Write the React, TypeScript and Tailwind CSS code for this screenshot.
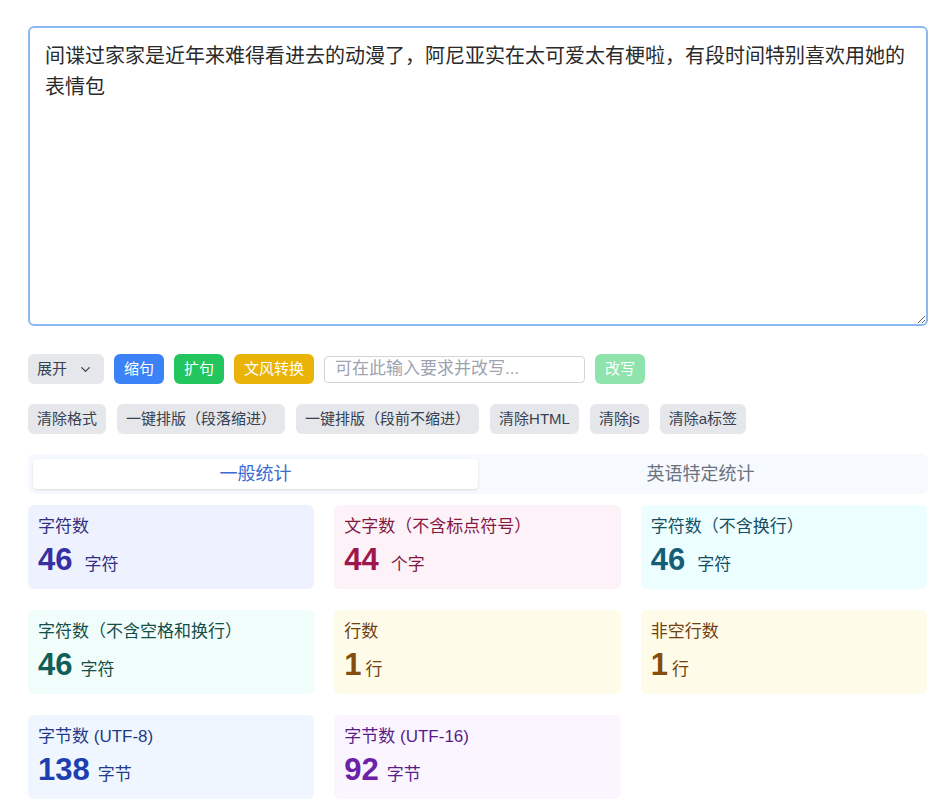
import { useState } from "react";

const FONT = { fontFamily: '"Liberation Sans", "Noto Sans CJK SC", sans-serif' };

const TEXT =
  "间谍过家家是近年来难得看进去的动漫了，阿尼亚实在太可爱太有梗啦，有段时间特别喜欢用她的表情包";

interface Stat {
  label: string;
  value: string;
  unit: string;
  box: string;
  labelColor: string;
  valueColor: string;
  gap: string;
}

const STATS: Stat[] = [
  { label: "字符数", value: "46", unit: "字符", box: "bg-[#eef2ff]", labelColor: "text-[#312e81]", valueColor: "text-[#3730a3]", gap: "gap-[12px]" },
  { label: "文字数（不含标点符号）", value: "44", unit: "个字", box: "bg-[#fdf2f8]", labelColor: "text-[#831843]", valueColor: "text-[#9d174d]", gap: "gap-[12px]" },
  { label: "字符数（不含换行）", value: "46", unit: "字符", box: "bg-[#ecfeff]", labelColor: "text-[#164e63]", valueColor: "text-[#155e75]", gap: "gap-[12px]" },
  { label: "字符数（不含空格和换行）", value: "46", unit: "字符", box: "bg-[#f0fdfa]", labelColor: "text-[#134e4a]", valueColor: "text-[#115e59]", gap: "gap-[8px]" },
  { label: "行数", value: "1", unit: "行", box: "bg-[#fefce8]", labelColor: "text-[#713f12]", valueColor: "text-[#854d0e]", gap: "gap-[4px]" },
  { label: "非空行数", value: "1", unit: "行", box: "bg-[#fefce8]", labelColor: "text-[#713f12]", valueColor: "text-[#854d0e]", gap: "gap-[4px]" },
  { label: "字节数 (UTF-8)", value: "138", unit: "字节", box: "bg-[#eff6ff]", labelColor: "text-[#1e3a8a]", valueColor: "text-[#1e40af]", gap: "gap-[8px]" },
  { label: "字节数 (UTF-16)", value: "92", unit: "字节", box: "bg-[#faf5ff]", labelColor: "text-[#581c87]", valueColor: "text-[#6b21a8]", gap: "gap-[8px]" },
];

const CLEAN = ["清除格式", "一键排版（段落缩进）", "一键排版（段前不缩进）", "清除HTML", "清除js", "清除a标签"];

export default function App() {
  const [text, setText] = useState(TEXT);
  const [tab, setTab] = useState(0);

  return (
    <div className="bg-white min-h-screen pt-[26px] pl-[28px]" style={FONT}>
      <div className="w-[900px]">
        <textarea
          value={text}
          onChange={(e) => setText(e.target.value)}
          className="block w-full h-[300px] rounded-md border-2 border-[#8cb8f0] px-[15px] py-[13px] text-[20px] leading-[31px] text-[#2a2a2a] outline-none resize-y"
          style={FONT}
        />

        {/* AI rewrite row */}
        <div className="mt-[28px] flex items-center gap-[10px] text-[15px]">
          <button className="h-[30px] pl-[9px] pr-[11px] rounded-md bg-[#e5e7eb] text-[#374151] flex items-center gap-[11px]">
            展开
            <svg width="15" height="15" viewBox="0 0 24 24" fill="none" stroke="currentColor" strokeWidth="2" strokeLinecap="round" strokeLinejoin="round">
              <path d="M6 9l6 6 6-6" />
            </svg>
          </button>
          <button className="h-[30px] px-[10px] rounded-md bg-[#3b82f6] text-white">缩句</button>
          <button className="h-[30px] px-[10px] rounded-md bg-[#22c55e] text-white">扩句</button>
          <button className="h-[30px] px-[10px] rounded-md bg-[#eab308] text-white">文风转换</button>
          <input
            placeholder="可在此输入要求并改写..."
            className="h-[27px] w-[261px] rounded border border-[#d1d5db] px-[10px] text-[17px] placeholder:text-[#9ca3af] outline-none"
            style={FONT}
          />
          <button className="h-[30px] px-[10px] rounded-md bg-[#8fe3ac] text-white cursor-not-allowed">改写</button>
        </div>

        {/* clean buttons */}
        <div className="mt-[20px] flex items-center gap-[11px] text-[15px]">
          {CLEAN.map((c) => (
            <button key={c} className="h-[30px] px-[9px] rounded-md bg-[#e5e7eb] text-[#374151]">
              {c}
            </button>
          ))}
        </div>

        {/* tabs */}
        <div className="mt-[20px] flex rounded-md bg-[#f6f9fe] p-[5px]">
          {["一般统计", "英语特定统计"].map((t, i) => (
            <button
              key={t}
              onClick={() => setTab(i)}
              className={
                i === tab
                  ? "flex-1 h-[30px] rounded-sm bg-white text-[18px] text-[#3a6bd0] shadow-sm"
                  : "flex-1 h-[30px] rounded-sm text-[18px] text-[#6b7280]"
              }
            >
              {t}
            </button>
          ))}
        </div>

        {/* stats */}
        <div className="mt-[11px] grid grid-cols-3 gap-x-[20px] gap-y-[21px] pr-[1px]">
          {STATS.map((s) => (
            <div key={s.label} className={`h-[84px] rounded-md px-[10px] pt-[11px] ${s.box}`}>
              <div className={`text-[17px] leading-[22px] ${s.labelColor}`}>{s.label}</div>
              <div className={`mt-[4px] flex items-baseline ${s.gap}`}>
                <span className={`text-[31px] leading-[36px] font-bold ${s.valueColor}`}>{s.value}</span>
                <span className={`text-[17px] ${s.labelColor}`}>{s.unit}</span>
              </div>
            </div>
          ))}
        </div>
      </div>
    </div>
  );
}
